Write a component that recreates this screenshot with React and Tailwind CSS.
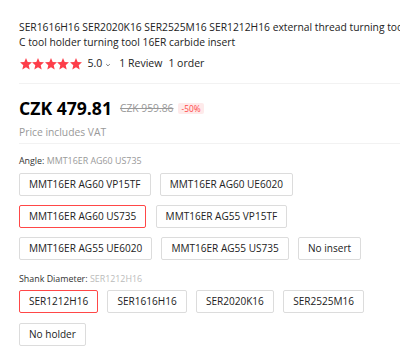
import React from "react";

const angles = [
  ["MMT16ER AG60 VP15TF", "MMT16ER AG60 UE6020"],
  ["MMT16ER AG60 US735", "MMT16ER AG55 VP15TF"],
  ["MMT16ER AG55 UE6020", "MMT16ER AG55 US735", "No insert"],
];

const shanks = [
  ["SER1212H16", "SER1616H16", "SER2020K16", "SER2525M16"],
  ["No holder"],
];

function Star() {
  return (
    <svg width="12" height="11.4" viewBox="1 1 22 21">
      <polygon
        fill="#fd3e4a"
        points="12,1 15.1,8.2 23,9 17,14.3 18.8,22 12,18 5.2,22 7,14.3 1,9 8.9,8.2"
      />
    </svg>
  );
}

function Option({ label, active }) {
  return (
    <div
      className={
        active
          ? "h-[23px] px-[9px] flex items-center rounded-[2px] border border-[#ff4747] text-[10.05px] text-[#222]"
          : "h-[23px] px-[9px] flex items-center rounded-[2px] border border-[#dcdcdc] text-[10.05px] text-[#222]"
      }
    >
      {label}
    </div>
  );
}

function OptionGroup({ rows, selected }) {
  return (
    <div className="flex flex-col gap-y-[9.3px] mt-[4.3px]">
      {rows.map((row, i) => (
        <div key={i} className="flex gap-x-[9.3px]">
          {row.map((o) => (
            <Option key={o} label={o} active={o === selected} />
          ))}
        </div>
      ))}
    </div>
  );
}

export default function App() {
  return (
    <div
      className="w-[400px] h-[358px] overflow-hidden bg-white text-[#222] pl-[19px] pt-[20px]"
      style={{ fontFamily: '"Open Sans", sans-serif' }}
    >
      {/* title */}
      <div className="w-[381px] overflow-hidden text-[10.3px] leading-[14.6px] whitespace-nowrap">
        <div>SER1616H16 SER2020K16 SER2525M16 SER1212H16 external thread turning tool</div>
        <div>C tool holder turning tool 16ER carbide insert</div>
      </div>

      {/* rating */}
      <div className="flex items-center h-[16px] mt-[6.7px] text-[10.5px]">
        <div className="flex gap-[0.4px] ml-[1px]">
          <Star />
          <Star />
          <Star />
          <Star />
          <Star />
        </div>
        <span className="ml-[6px]">5.0</span>
        <svg width="6" height="6" viewBox="0 0 10 10" className="ml-[3px] mt-[2px]">
          <path d="M2 3.5l3 3 3-3" stroke="#555" strokeWidth="1.3" fill="none" />
        </svg>
        <span className="ml-[8px]">1 Review</span>
        <span className="ml-[6px]">1 order</span>
      </div>

      <div className="mt-[11px] border-t border-[#f2f2f2]" />

      {/* price */}
      <div className="flex items-center h-[24px] mt-[12.7px]">
        <span className="text-[17.6px] font-bold text-black">CZK 479.81</span>
        <span className="ml-[8px] text-[10.3px] text-[#999] line-through">CZK 959.86</span>
        <span className="ml-[5px] px-[3px] h-[11.6px] leading-[11.6px] rounded-[2px] bg-[#feeaea] text-[#ff4747] text-[8.3px]">
          -50%
        </span>
      </div>
      <div className="mt-[4.7px] text-[10.3px] leading-[14px] text-[#999]">Price includes VAT</div>

      <div className="mt-[3.6px] border-t border-[#f2f2f2]" />

      {/* angle */}
      <div className="mt-[10.4px] text-[8.9px] leading-[14px]">
        <span className="text-[#333]">Angle: </span>
        <span className="text-[#999]">MMT16ER AG60 US735</span>
      </div>
      <OptionGroup rows={angles} selected="MMT16ER AG60 US735" />

      {/* shank */}
      <div className="mt-[12px] text-[8.9px] leading-[14px]">
        <span className="text-[#333]">Shank Diameter: </span>
        <span className="text-[#bbb]">SER1212H16</span>
      </div>
      <OptionGroup rows={shanks} selected="SER1212H16" />
    </div>
  );
}
